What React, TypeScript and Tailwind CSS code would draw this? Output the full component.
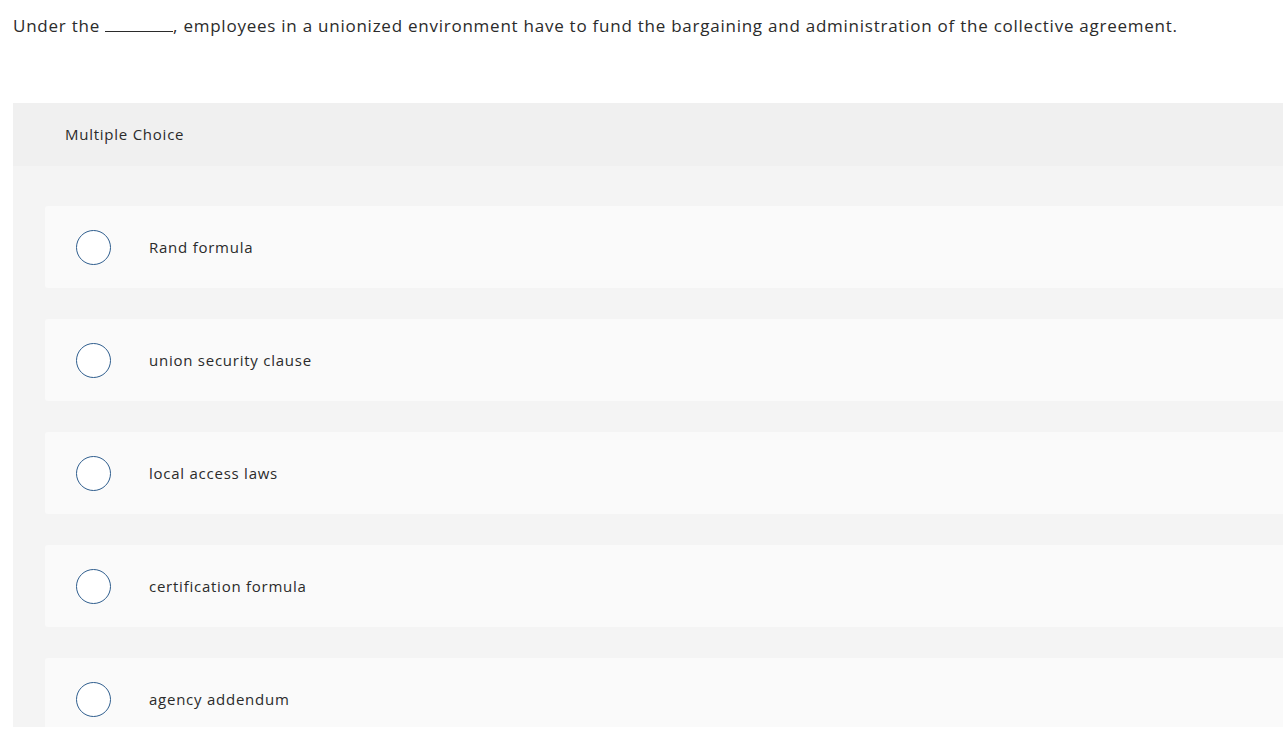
const options = [
  "Rand formula",
  "union security clause",
  "local access laws",
  "certification formula",
  "agency addendum",
];

export default function App() {
  return (
    <div className="h-[732px] overflow-hidden bg-white font-['Open_Sans',Arial,sans-serif] tracking-[0.047em] text-[#2b2b2b]">
      {/* Question */}
      <p className="pl-[13px] pt-[14px] text-[17px] leading-[24px]">
        Under the{" "}
        <span className="inline-block w-[68px] border-b border-[#2b2b2b] align-baseline"></span>
        , employees in a unionized environment have to fund the bargaining and administration of the
        collective agreement.
      </p>

      {/* Answer panel */}
      <div className="ml-[13px] mt-[65px] h-[624px] overflow-hidden">
        <div className="flex h-[63px] items-center bg-[#f0f0f0] pl-[52px] text-[15px]">
          Multiple Choice
        </div>
        <div className="flex flex-col gap-[31px] bg-[#f4f4f4] pl-[32px] pt-[40px] pb-[31px]">
          {options.map((opt) => (
            <div
              key={opt}
              className="flex h-[82px] items-center rounded-l-[3px] bg-[#fafafa] pl-[31px]"
            >
              <span className="h-[35px] w-[35px] shrink-0 rounded-full border border-[#2f5e8e] bg-white"></span>
              <span className="ml-[38px] text-[15px]">{opt}</span>
            </div>
          ))}
        </div>
      </div>
    </div>
  );
}
